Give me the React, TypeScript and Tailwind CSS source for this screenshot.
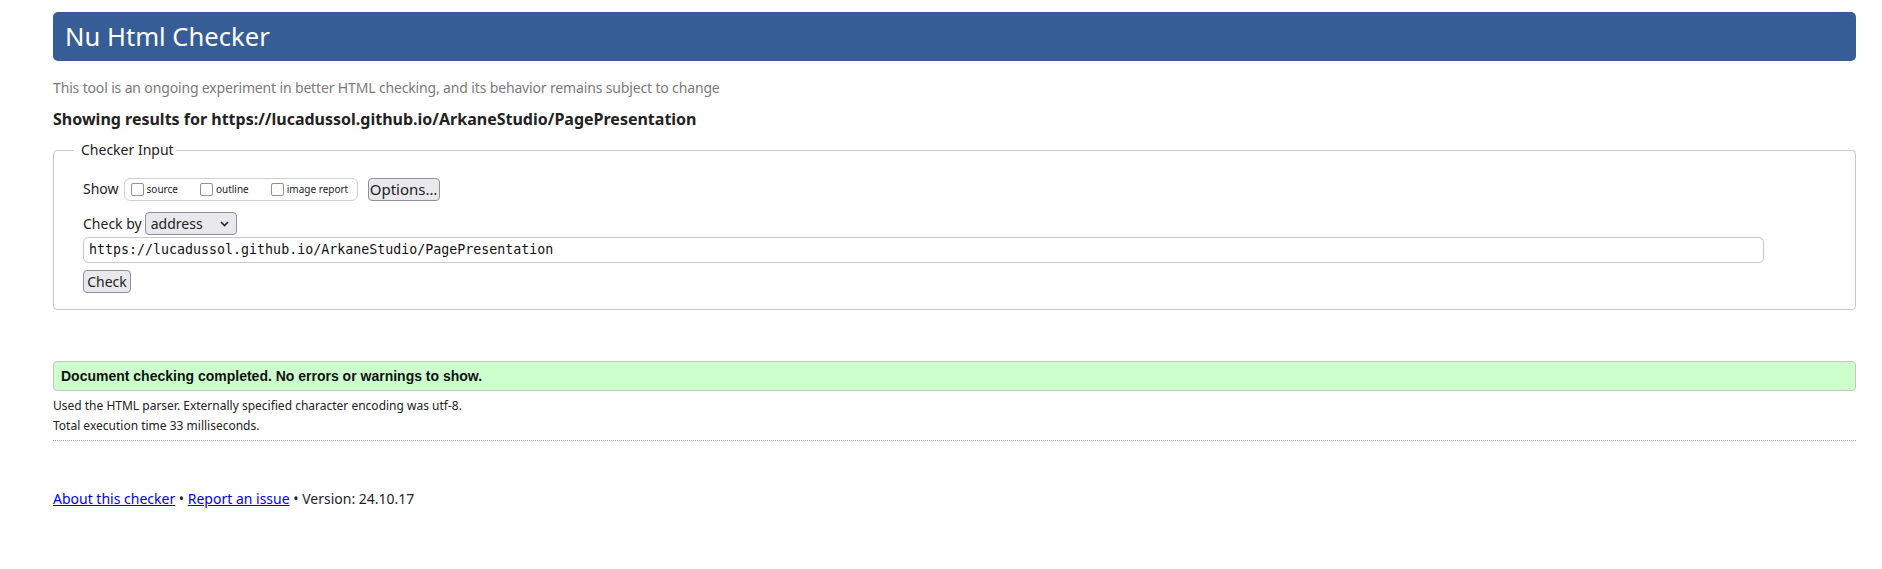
import React from "react";

const noto = "font-['Noto_Sans',sans-serif]";

function Box({ label }: { label: string }) {
  return (
    <span className="flex items-center">
      <span className="inline-block w-[13px] h-[13px] border border-[#8f8f9d] rounded-[2px] bg-white" />
      <span className="ml-[3px] text-[10px] leading-[14px] text-[#222]">{label}</span>
    </span>
  );
}

export default function App() {
  return (
    <div className={`${noto} bg-white text-[#222] pl-[53px] pr-[26px] pb-[60px]`}>
      <div className="mt-[12px] h-[49px] bg-[#365d95] rounded-[5px] pl-[12px] flex items-center">
        <h1 className="text-[25.6px] leading-[49px] text-white font-normal">Nu Html Checker</h1>
      </div>
      <p className="mt-[17px] text-[14px] tracking-[-0.15px] leading-[20px] text-[#7a7a7a]">
        This tool is an ongoing experiment in better HTML checking, and its behavior remains subject to change
      </p>
      <p className="mt-[10px] text-[16px] leading-[22px] font-bold text-[#222]">
        Showing results for https://lucadussol.github.io/ArkaneStudio/PagePresentation
      </p>
      <fieldset className="mt-[10px] border border-[#c8c8c8] rounded-[4px] pl-[29px] pr-[20px] pt-[17px] pb-[16px]">
        <legend className="ml-[-9px] pl-[7px] pr-[2px] text-[14px] leading-[20px] text-[#222]">Checker Input</legend>
        <div className="flex items-center h-[24px]">
          <span className="text-[14px] leading-[20px]">Show</span>
          <div className="ml-[5px] h-[23px] w-[234px] border border-[#cfcfcf] rounded-[6px] flex items-center pl-[6px] gap-[22px]">
            <Box label="source" />
            <Box label="outline" />
            <Box label="image report" />
          </div>
          <button className="ml-[10px] h-[23px] w-[72px] bg-[#e9e9ed] border border-[#8f8f9d] rounded-[4px] text-[15px] leading-[20px] text-[#222] flex items-center justify-center">
            Options…
          </button>
        </div>
        <div className="mt-[11px] flex items-center h-[23px]">
          <span className="text-[14px] leading-[20px]">Check by</span>
          <div className="ml-[3px] h-[23px] w-[92px] bg-[#e9e9ed] border border-[#8f8f9d] rounded-[4px] flex items-center pl-[5px] pr-[7px] justify-between">
            <span className="text-[14px] leading-[20px] text-[#222]">address</span>
            <svg width="9" height="6" viewBox="0 0 9 6" className="mt-[1px]">
              <path d="M1 1 L4.5 4.5 L8 1" fill="none" stroke="#222" strokeWidth="1.6" />
            </svg>
          </div>
        </div>
        <div className="mt-[2px] h-[26px] w-[1681px] border border-[#c8c8c8] rounded-[5px] flex items-center pl-[5px]">
          <span className="font-['DejaVu_Sans_Mono',monospace] text-[13.3px] leading-[18px] text-[#111]">
            https://lucadussol.github.io/ArkaneStudio/PagePresentation
          </span>
        </div>
        <button className="mt-[7px] h-[23px] w-[48px] bg-[#e9e9ed] border border-[#8f8f9d] rounded-[4px] text-[14px] leading-[20px] text-[#222] flex items-center justify-center">
          Check
        </button>
      </fieldset>
      <div className="mt-[51px] h-[30px] bg-[#ccffcc] border border-[#c4c4c4] rounded-[4px] flex items-center pl-[7px]">
        <p className="font-['Liberation_Sans',Arial,sans-serif] font-bold text-[14px] leading-[18px] text-[#111]">
          Document checking completed. No errors or warnings to show.
        </p>
      </div>
      <p className="mt-[5px] text-[12px] leading-[20px] text-[#222]">
        Used the HTML parser. Externally specified character encoding was utf-8.
      </p>
      <p className="text-[12px] leading-[20px] text-[#222]">Total execution time 33 milliseconds.</p>
      <hr className="mt-[4px] border-0 border-t border-dotted border-t-[#aaa]" />
      <p className="mt-[48px] text-[14px] leading-[20px] text-[#222]">
        <a href="#" className="text-[#0000ee] underline">About this checker</a>
        {" • "}
        <a href="#" className="text-[#0000ee] underline">Report an issue</a>
        {" • Version: 24.10.17"}
      </p>
    </div>
  );
}
